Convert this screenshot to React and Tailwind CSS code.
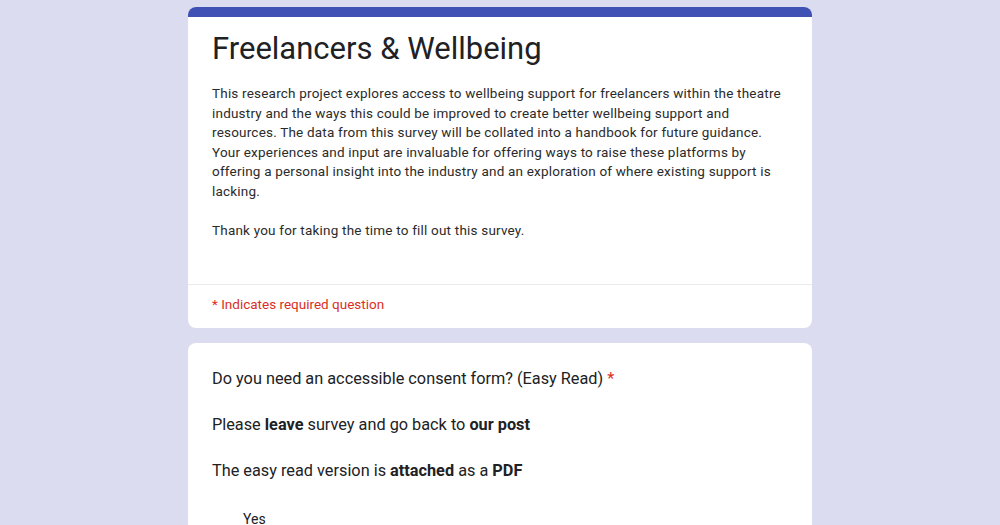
export default function App() {
  return (
    <div className="min-h-[525px] h-[525px] overflow-hidden bg-[#dcdcf0] font-['Roboto',sans-serif] text-[#202124]">
      <div className="mx-auto w-[624px] pt-[7px]">
        <div className="overflow-hidden rounded-lg bg-white">
          <div className="h-[10px] bg-[#3f51b5]" />
          <div className="px-6 pt-[12px] pb-[44px]">
            <h1 className="text-[31px] leading-[40px] font-normal">Freelancers &amp; Wellbeing</h1>
            <p className="mt-[15px] text-[13.5px] leading-[19.5px] tracking-[0.2px] text-[#2b2b2b]">
              This research project explores access to wellbeing support for freelancers within the theatre industry and the ways this could be improved to create better wellbeing support and resources. The data from this survey will be collated into a handbook for future guidance. Your experiences and input are invaluable for offering ways to raise these platforms by offering a personal insight into the industry and an exploration of where existing support is lacking.
            </p>
            <p className="mt-[19.5px] text-[13.5px] leading-[19.5px] tracking-[0.2px] text-[#2b2b2b]">
              Thank you for taking the time to fill out this survey.
            </p>
          </div>
          <div className="border-t border-[#e8eaed] px-6 pt-[10px] pb-[14px] text-[13.5px] leading-[19px] text-[#d93025]">
            * Indicates required question
          </div>
        </div>

        <div className="mt-[15px] rounded-lg bg-white px-6 pt-[24px] pb-10">
          <div className="text-[16.3px] leading-[24px]">
            Do you need an accessible consent form? (Easy Read) <span className="text-[#d93025]">*</span>
          </div>
          <p className="mt-[22px] text-[16.3px] leading-[24px]">
            Please <b className="font-bold">leave</b> survey and go back to <b className="font-bold">our post</b>
          </p>
          <p className="mt-[22px] text-[16.3px] leading-[24px]">
            The easy read version is <b className="font-bold">attached</b> as a <b className="font-bold">PDF</b>
          </p>
          <div className="mt-[26px] pl-[31px] text-[14px] leading-[20px]">Yes</div>
        </div>
      </div>
    </div>
  );
}
